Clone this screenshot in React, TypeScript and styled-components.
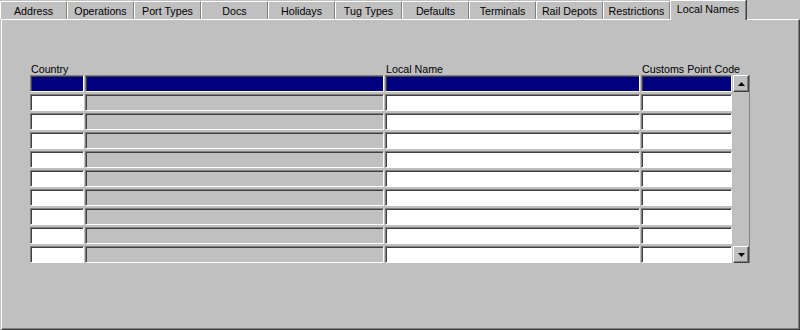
import { FC } from 'react';
import styled, { createGlobalStyle } from 'styled-components';

const GlobalStyle = createGlobalStyle`
	html, body {
		margin: 0;
		padding: 0;
		background: #c0c0c0;
	}
	body {
		font-family: 'Liberation Sans', Arial, sans-serif;
		font-size: 10.7px;
		color: #000;
	}
`;

const Window = styled.div`
	width: 800px;
	height: 330px;
	display: flex;
	flex-direction: column;
	background: #c0c0c0;
	overflow: hidden;
`;

const TabStrip = styled.div`
	display: flex;
	align-items: flex-end;
	height: 19px;
	position: relative;
	z-index: 1;
`;

const Tab = styled.div<{ $active?: boolean; $width: number }>`
	box-sizing: border-box;
	width: ${p => p.$width}px;
	height: ${p => (p.$active ? 20 : 18)}px;
	margin-bottom: ${p => (p.$active ? -1 : 0)}px;
	display: flex;
	align-items: center;
	justify-content: center;
	padding-bottom: ${p => (p.$active ? 3 : 0)}px;
	border-top: 1px solid #fff;
	border-left: 1px solid #fff;
	border-right: 1px solid #808080;
	box-shadow: ${p => (p.$active ? '1px 0 0 #404040' : 'none')};
	background: #c0c0c0;
	white-space: nowrap;
`;

const Panel = styled.div`
	flex: 1;
	box-sizing: border-box;
	margin-left: 1px;
	border-top: 1px solid #fff;
	border-left: 1px solid #fff;
	border-right: 1px solid #404040;
	border-bottom: 1px solid #404040;
	box-shadow: inset -1px -1px 0 #808080;
	padding: 39px 0 0 28px;
`;

const Grid = styled.div`
	display: grid;
	grid-template-columns: 54px 299px 255px 91px 17px;
	grid-template-rows: 14px repeat(10, 17px);
	column-gap: 1px;
	row-gap: 2px;
`;

const Label = styled.div<{ $span?: number }>`
	grid-column: span ${p => p.$span ?? 1};
	white-space: nowrap;
	padding-left: 1px;
	margin-bottom: -2px;
	align-self: end;
	line-height: 12px;
`;

const Cell = styled.div<{ $selected?: boolean; $disabled?: boolean }>`
	box-sizing: border-box;
	border-style: solid;
	border-width: 1px;
	border-color: #808080 #fff #fff #808080;
	box-shadow: inset 1px 1px 0 #404040;
	background: ${p => (p.$selected ? '#000080' : p.$disabled ? '#c0c0c0' : '#fff')};
`;

const Scrollbar = styled.div`
	grid-column: 5;
	grid-row: 2 / span 10;
	display: flex;
	flex-direction: column;
	justify-content: space-between;
	background: #c0c0c0;
	border-right: 1px solid #808080;
	box-sizing: border-box;
`;

const ArrowButton = styled.div`
	box-sizing: border-box;
	height: 17px;
	display: flex;
	align-items: center;
	justify-content: center;
	border-style: solid;
	border-width: 1px;
	border-color: #fff #404040 #404040 #fff;
	box-shadow: inset -1px -1px 0 #808080;
	background: #c0c0c0;
`;

const tabs = [
	'Address',
	'Operations',
	'Port Types',
	'Docs',
	'Holidays',
	'Tug Types',
	'Defaults',
	'Terminals',
	'Rail Depots',
	'Restrictions',
	'Local Names',
];

const Arrow: FC<{ down?: boolean }> = ({ down }) => (
	<svg width='7' height='4' viewBox='0 0 7 4'>
		<polygon points={down ? '0,0 7,0 3.5,4' : '3.5,0 7,4 0,4'} fill='#000' />
	</svg>
);

const Row: FC<{ selected: boolean }> = ({ selected }) => (
	<>
		<Cell $selected={selected} />
		<Cell $selected={selected} $disabled />
		<Cell $selected={selected} />
		<Cell $selected={selected} />
	</>
);

const App = () => {
	const rows = Array.from({ length: 10 }, (_, i) => i);

	return (
		<Window>
			<GlobalStyle />
			<TabStrip>
				{tabs.map((t, i) => (
					<Tab key={t} $active={i === tabs.length - 1} $width={i === tabs.length - 1 ? 76 : 67}>
						{t}
					</Tab>
				))}
			</TabStrip>
			<Panel>
				<Grid>
					<Label $span={2}>Country</Label>
					<Label>Local Name</Label>
					<Label>Customs Point Code</Label>
					<div />
					{rows.map(r => (
						<Row key={r} selected={r === 0} />
					))}
					<Scrollbar>
						<ArrowButton>
							<Arrow />
						</ArrowButton>
						<ArrowButton>
							<Arrow down />
						</ArrowButton>
					</Scrollbar>
				</Grid>
			</Panel>
		</Window>
	);
};

export default App;
